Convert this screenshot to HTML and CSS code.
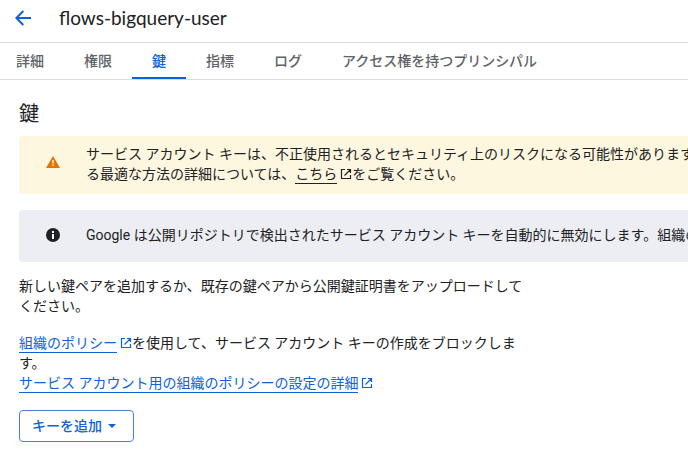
FILE: index.html
```html
<!DOCTYPE html>
<html lang="ja">
<head>
<meta charset="utf-8">
<meta name="viewport" content="width=device-width, initial-scale=1">
<title>flows-bigquery-user</title>
<link rel="stylesheet" href="styles.css">
</head>
<body>
<svg class="defs" aria-hidden="true">
  <symbol id="external" viewBox="0 0 12 12">
    <path d="M5 1.5H1.5v9h9V7M7 1.5h3.5V5M10.5 1.5L4.5 7.5" fill="none" stroke="currentColor" stroke-width="1.2"/>
  </symbol>
</svg>
<header class="header">
  <button class="back" type="button" aria-label="戻る">
    <svg viewBox="0 0 16 16" width="16" height="16"><path d="M16 8H1.5M8.3 1L1.4 8l6.9 7" fill="none" stroke="currentColor" stroke-width="2"/></svg>
  </button>
  <h1 class="title">flows-bigquery-user</h1>
</header>
<nav class="tabs">
  <a class="tab" href="#details">詳細</a>
  <a class="tab" href="#permissions">権限</a>
  <a class="tab active" href="#keys" aria-current="page">鍵</a>
  <a class="tab" href="#metrics">指標</a>
  <a class="tab" href="#logs">ログ</a>
  <a class="tab" href="#principals">アクセス権を持つプリンシパル</a>
</nav>
<main class="main">
  <h2 class="heading">鍵</h2>
  <section class="alert warning">
    <svg class="alert-icon" viewBox="0 0 14 14"><path d="M7 1L14 13H0z" fill="#e37400"/><path d="M6.3 5h1.4v3.6H6.3zM6.3 9.6h1.4V11H6.3z" fill="#fef7e0"/></svg>
    <p class="alert-text">サービス アカウント キーは、不正使用されるとセキュリティ上のリスクになる可能性があります。<br>る最適な方法の詳細については、<a class="link plain" href="#guide">こちら</a><svg class="external"><use href="#external"/></svg>をご覧ください。</p>
  </section>
  <section class="alert info">
    <svg class="alert-icon" viewBox="0 0 14 14"><circle cx="7" cy="7" r="7" fill="#202124"/><path d="M6 3h2v2H6zM6 6h2v5H6z" fill="#fff"/></svg>
    <p class="alert-text">Google は公開リポジトリで検出されたサービス アカウント キーを自動的に無効にします。組織の</p>
  </section>
  <p class="copy">新しい鍵ペアを追加するか、既存の鍵ペアから公開鍵証明書をアップロードしてください。</p>
  <p class="copy"><a class="link" href="#policy">組織のポリシー</a><svg class="external blue"><use href="#external"/></svg>を使用して、サービス アカウント キーの作成をブロックします。<br><a class="link" href="#policy-settings">サービス アカウント用の組織のポリシーの設定の詳細</a><svg class="external blue"><use href="#external"/></svg></p>
  <button class="add" type="button">キーを追加<svg viewBox="0 0 8 4" width="8" height="4"><path d="M0 0h8L4 4z" fill="currentColor"/></svg></button>
</main>
</body>
</html>
```
FILE: styles.css
```css
* {
  box-sizing: border-box;
}

body {
  margin: 0;
  background: #fff;
  color: #202124;
  font: 14px/20px Roboto, "Noto Sans CJK JP", sans-serif;
  overflow-x: hidden;
}

h1, h2, p {
  margin: 0;
  font-weight: 400;
}

.defs {
  display: none;
}

.header {
  display: flex;
  align-items: center;
  gap: 28px;
  padding: 6px 15px 12px;
  border-bottom: 1px solid #dadce0;
}

.back {
  display: flex;
  padding: 0;
  border: 0;
  background: none;
  color: #0b62dc;
}

.title {
  font: 19px/24px Lato, sans-serif;
}

.tabs {
  display: flex;
  padding-right: 16px;
  border-bottom: 1px solid #dadce0;
  white-space: nowrap;
}

.tab {
  padding: 8px 20px 6px;
  border-bottom: 2px solid transparent;
  color: #5f6368;
  font-weight: 500;
  text-decoration: none;
}

.tab:first-child {
  padding-left: 16px;
}

.tab.active {
  border-color: #0b62dc;
  color: #0b62dc;
}

.main {
  padding: 22px 0 8px 19px;
}

.heading {
  margin-bottom: 10px;
  font-size: 20px;
  line-height: 24px;
}

.alert {
  display: flex;
  align-items: center;
  gap: 26px;
  margin-bottom: 16px;
  padding: 8px 0 10px 27px;
  border-radius: 4px 0 0 4px;
  overflow: hidden;
  white-space: nowrap;
}

.warning {
  align-items: flex-start;
  background: #fef7e0;
}

.warning .alert-icon {
  margin-top: 11px;
}

.info {
  margin-bottom: 14px;
  padding: 15px 0 17px 27px;
  background: #eceef3;
}

.alert-icon {
  flex: none;
  width: 14px;
  height: 14px;
}

.link {
  padding-bottom: 1px;
  border-bottom: 1px solid currentColor;
  color: #0b62dc;
  text-decoration: none;
}

.plain {
  color: inherit;
}

.external {
  width: 12px;
  height: 12px;
  margin-left: 3px;
  vertical-align: -1px;
}

.blue {
  color: #0b62dc;
}

.copy {
  max-width: 508px;
  margin-bottom: 17px;
}

.add {
  display: flex;
  align-items: center;
  gap: 6px;
  padding: 5px 17px 5px 12px;
  border: 1px solid #4a7fd6;
  border-radius: 4px;
  background: #fff;
  color: #0b62dc;
  font: inherit;
  font-weight: 500;
}
```
